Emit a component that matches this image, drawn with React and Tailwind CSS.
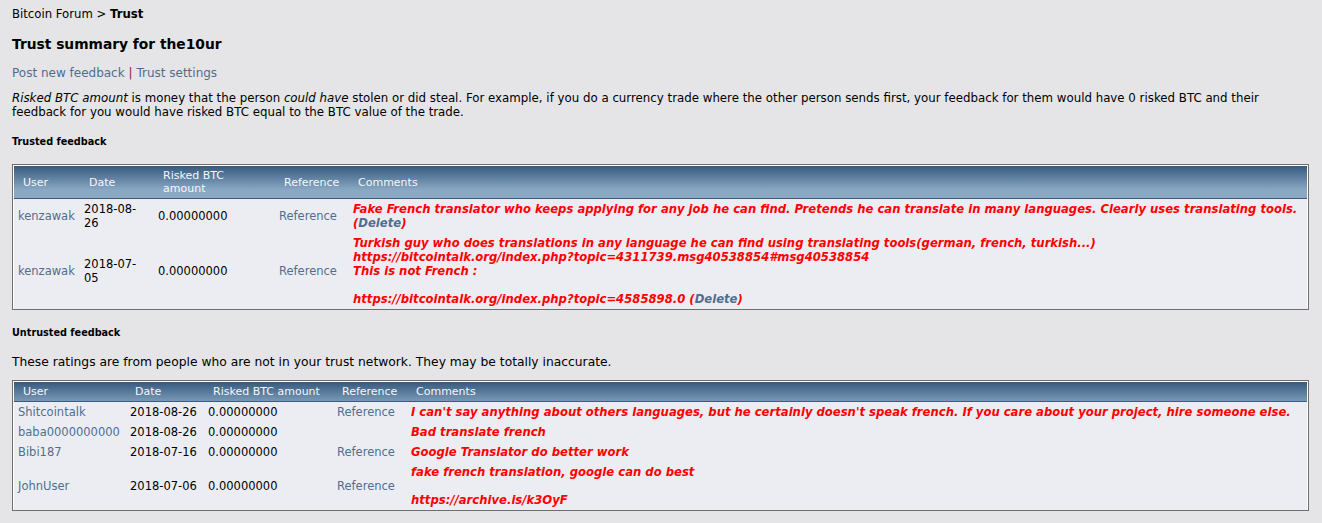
import React from "react";

const LINK = "text-[#4f6d8f]";

function Head({ children, narrow }) {
  return (
    <th className="text-left font-normal align-middle pl-[9px] pr-[2px] py-[3px] text-[11px] leading-[13px] text-[#f4f7fb] border-b border-[#3d5b7d]">
      {narrow ? <div className="max-w-[70px]">{children}</div> : children}
    </th>
  );
}

function Td({ children, className = "" }) {
  return (
    <td className={"align-middle px-[4px] py-[3px] " + className}>{children}</td>
  );
}

function Comment({ children }) {
  return <span className="text-[#ff0000] font-bold italic text-[11.63px]">{children}</span>;
}

function Del() {
  return (
    <>
      (<span className={LINK}>Delete</span>)
    </>
  );
}

function TableBox({ cols, headers, narrowIdx, children }) {
  return (
    <div className="border border-[#6e6e6e]">
      <div className="border-t border-x border-white bg-[#ecedf2]">
        <table className="w-full table-fixed border-collapse">
          <colgroup>
            {cols.map((w, i) => (
              <col key={i} style={w ? { width: w } : undefined} />
            ))}
          </colgroup>
          <thead>
            <tr className="bg-[linear-gradient(to_bottom,#365a7f_0px,#8aa8c3_24px,#8aa8c3_100%)]">
              {headers.map((h, i) => (
                <Head key={i} narrow={i === narrowIdx}>
                  {h}
                </Head>
              ))}
            </tr>
          </thead>
          <tbody>{children}</tbody>
        </table>
      </div>
    </div>
  );
}

export default function App() {
  return (
    <div
      className="min-h-[523px] bg-[#e5e5e8] text-black px-[12px] pr-[13px] pt-[7px] text-[11.5px] leading-[14px]"
      style={{ fontFamily: '"DejaVu Sans", Verdana, sans-serif' }}
    >
      <div className="text-[11.7px]">
        Bitcoin Forum &gt; <b>Trust</b>
      </div>
      <h1 className="mt-[14px] text-[13.8px] leading-[18px] font-bold">
        Trust summary for the10ur
      </h1>
      <div className="mt-[13px] text-[12px]">
        <span className={LINK}>Post new feedback</span>{" "}
        <span className="text-[#7a1f3d]">|</span>{" "}
        <span className={LINK}>Trust settings</span>
      </div>
      <p className="mt-[11px] text-[11.8px]">
        <i>Risked BTC amount</i> is money that the person <i>could have</i> stolen or did steal. For
        example, if you do a currency trade where the other person sends first, your feedback for
        them would have 0 risked BTC and their feedback for you would have risked BTC equal to the
        BTC value of the trade.
      </p>
      <div className="mt-[17px] text-[9.7px] leading-[12px] font-bold">Trusted feedback</div>
      <div className="mt-[16px]">
        <TableBox
          cols={[66, 74, 121, 74, null]}
          headers={["User", "Date", "Risked BTC amount", "Reference", "Comments"]}
          narrowIdx={2}
        >
          <tr>
            <Td className={LINK}>kenzawak</Td>
            <Td>
              <div className="max-w-[60px]">2018-08-26</div>
            </Td>
            <Td>0.00000000</Td>
            <Td className={LINK}>Reference</Td>
            <Td>
              <Comment>
                Fake French translator who keeps applying for any job he can find. Pretends he can
                translate in many languages. Clearly uses translating tools. <Del />
              </Comment>
            </Td>
          </tr>
          <tr>
            <Td className={LINK}>kenzawak</Td>
            <Td>
              <div className="max-w-[60px]">2018-07-05</div>
            </Td>
            <Td>0.00000000</Td>
            <Td className={LINK}>Reference</Td>
            <Td>
              <Comment>
                Turkish guy who does translations in any language he can find using translating
                tools(german, french, turkish...)
                <br />
                https://bitcointalk.org/index.php?topic=4311739.msg40538854#msg40538854
                <br />
                This is not French :
                <br />
                <br />
                https://bitcointalk.org/index.php?topic=4585898.0 <Del />
              </Comment>
            </Td>
          </tr>
        </TableBox>
      </div>
      <div className="mt-[17px] text-[9.7px] leading-[12px] font-bold">Untrusted feedback</div>
      <p className="mt-[16px] text-[12.3px]">
        These ratings are from people who are not in your trust network. They may be totally
        inaccurate.
      </p>
      <div className="mt-[11px]">
        <TableBox
          cols={[112, 78, 129, 74, null]}
          headers={["User", "Date", "Risked BTC amount", "Reference", "Comments"]}
          narrowIdx={-1}
        >
          <tr>
            <Td className={LINK}>Shitcointalk</Td>
            <Td>2018-08-26</Td>
            <Td>0.00000000</Td>
            <Td className={LINK}>Reference</Td>
            <Td>
              <Comment>
                I can't say anything about others languages, but he certainly doesn't speak french.
                If you care about your project, hire someone else.
              </Comment>
            </Td>
          </tr>
          <tr>
            <Td className={LINK}>baba0000000000</Td>
            <Td>2018-08-26</Td>
            <Td>0.00000000</Td>
            <Td></Td>
            <Td>
              <Comment>Bad translate french</Comment>
            </Td>
          </tr>
          <tr>
            <Td className={LINK}>Bibi187</Td>
            <Td>2018-07-16</Td>
            <Td>0.00000000</Td>
            <Td className={LINK}>Reference</Td>
            <Td>
              <Comment>Google Translator do better work</Comment>
            </Td>
          </tr>
          <tr>
            <Td className={LINK}>JohnUser</Td>
            <Td>2018-07-06</Td>
            <Td>0.00000000</Td>
            <Td className={LINK}>Reference</Td>
            <Td>
              <Comment>
                fake french translation, google can do best
                <br />
                <br />
                https://archive.is/k3OyF
              </Comment>
            </Td>
          </tr>
        </TableBox>
      </div>
    </div>
  );
}
